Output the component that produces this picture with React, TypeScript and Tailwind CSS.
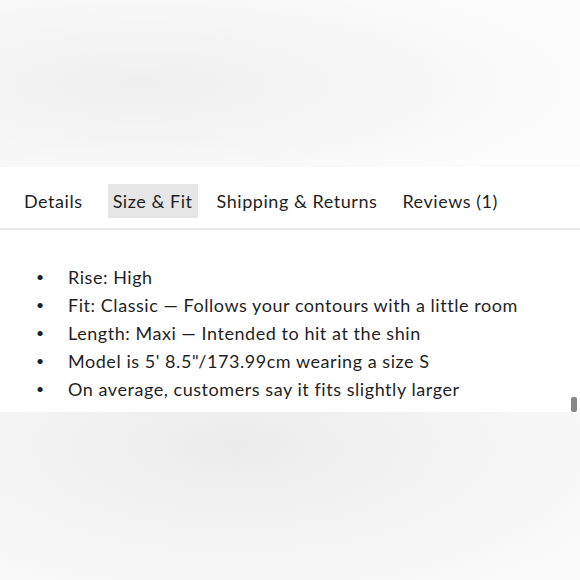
const tabs = ['Details', 'Size & Fit', 'Shipping & Returns', 'Reviews (1)']

const fitNotes = [
  'Rise: High',
  'Fit: Classic — Follows your contours with a little room',
  'Length: Maxi — Intended to hit at the shin',
  'Model is 5\' 8.5"/173.99cm wearing a size S',
  'On average, customers say it fits slightly larger',
]

export default function App() {
  const active = 'Size & Fit'

  return (
    <div className="w-[580px] h-[580px] overflow-hidden flex flex-col bg-white text-[#1f1f1f] font-['Lato','Liberation_Sans',sans-serif] tracking-[0.55px]">
      {/* blurred top */}
      <div className="h-[167px] shrink-0 bg-[radial-gradient(ellipse_440px_120px_at_140px_85px,#efefef,#fcfcfc)]" />

      <div className="relative h-[245px] shrink-0 bg-white">
        {/* Tabs */}
        <div className="flex items-center gap-[13px] pl-[18px] pt-[17px] pb-[10px] border-b-2 border-[#e8e8e8]">
          {tabs.map((tab) => (
            <button
              key={tab}
              className={`h-[34px] text-[18px] leading-none tracking-[0.55px] ${
                tab === active ? 'bg-[#e6e6e6] px-[5px]' : 'px-[6px]'
              } ${tab === 'Details' ? 'mr-[6px]' : ''}`}
            >
              {tab}
            </button>
          ))}
        </div>

        {/* Bullets */}
        <ul className="pt-[33px] pl-[36px] text-[18px] leading-[28px]">
          {fitNotes.map((note) => (
            <li key={note} className="flex items-center">
              <span className="w-[32px] text-[14px]">•</span>
              <span>{note}</span>
            </li>
          ))}
        </ul>

        {/* scrollbar thumb */}
        <div className="absolute right-[3px] bottom-0 w-[6px] h-[15px] rounded-[2px] bg-[#888]" />
      </div>

      {/* blurred bottom */}
      <div className="flex-1 bg-[radial-gradient(ellipse_420px_170px_at_235px_35px,#ececec,#fafafa)]" />
    </div>
  )
}
